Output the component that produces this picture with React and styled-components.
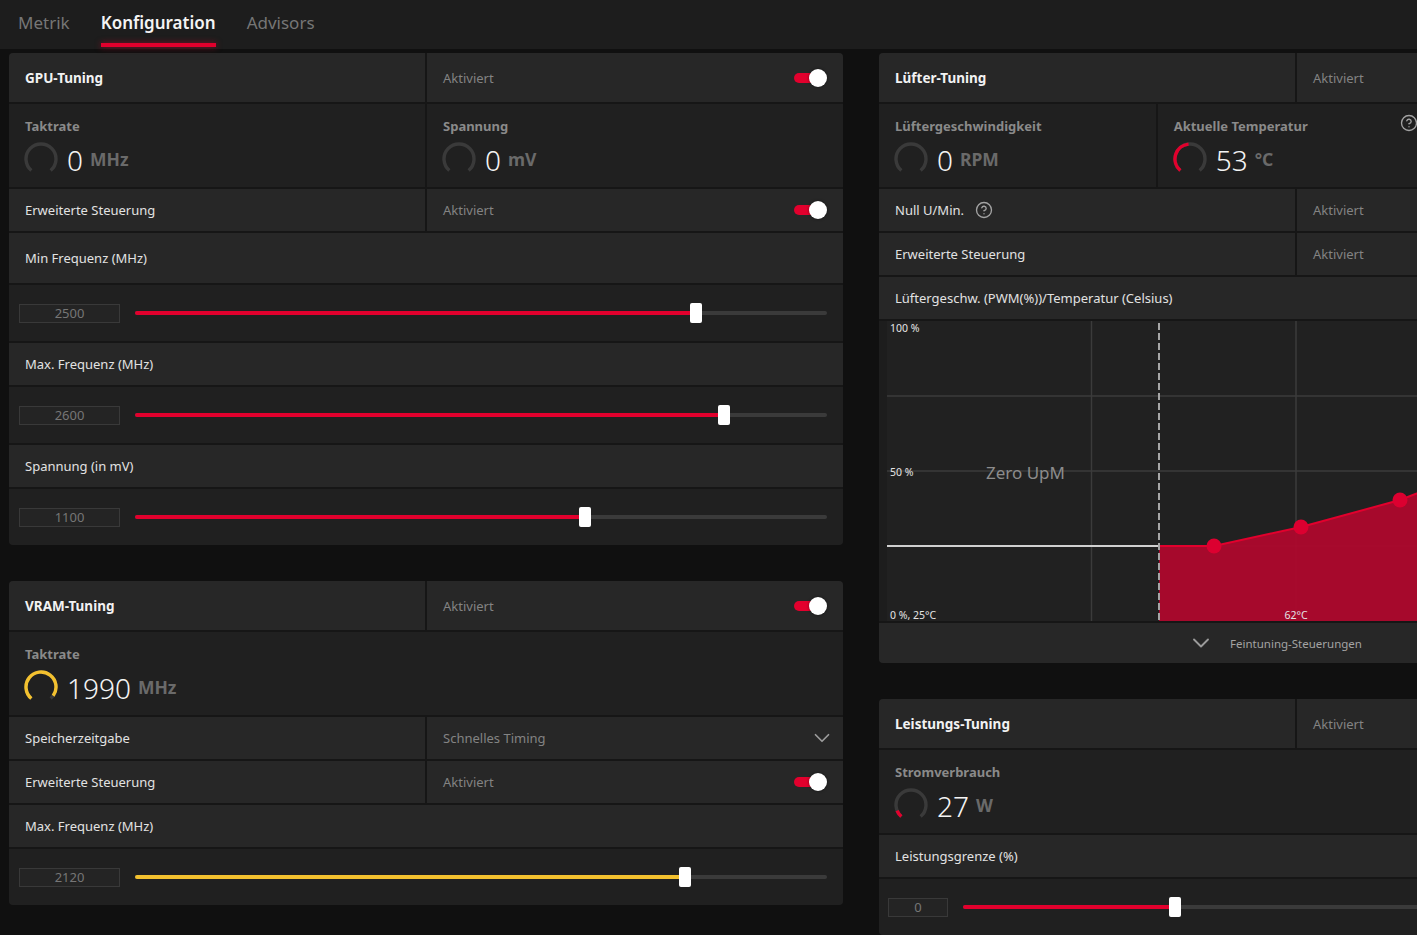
import React from "react";
import styled, { createGlobalStyle } from "styled-components";
import { ChevronDown, CircleHelp } from "lucide-react";

const RED = "#e2002d";
const YELLOW = "#f3c12f";

const GlobalStyle = createGlobalStyle`
  *, *::before, *::after { box-sizing: border-box; }
  html, body { margin: 0; padding: 0; background: #101010; }
  body {
    width: 1417px;
    height: 935px;
    overflow: hidden;
    font-family: "Noto Sans", "Open Sans", "DejaVu Sans", sans-serif;
    color: #e6e6e6;
    -webkit-font-smoothing: antialiased;
  }
`;

const Screen = styled.div`
  width: 1417px;
  height: 935px;
  overflow: hidden;
  display: flex;
  flex-direction: column;
`;

const TopBar = styled.header`
  flex: 0 0 49px;
  display: flex;
  gap: 31px;
  padding-left: 18px;
  background: #1d1d1d;
`;

const Tab = styled.div`
  position: relative;
  height: 49px;
  display: flex;
  align-items: center;
  padding-bottom: 5px;
  font-size: 17px;
  font-weight: ${(p) => (p.$active ? 600 : 400)};
  color: ${(p) => (p.$active ? "#f4f4f4" : "#767676")};
  &::after {
    content: "";
    display: ${(p) => (p.$active ? "block" : "none")};
    position: absolute;
    left: 0;
    right: 0;
    bottom: 2px;
    height: 4px;
    background: ${RED};
    box-shadow: 0 0 6px rgba(226, 0, 45, 0.55);
  }
`;

const Workspace = styled.main`
  display: flex;
  align-items: flex-start;
  gap: 36px;
  padding: 4px 0 0 9px;
`;

const Column = styled.div`
  flex: 0 0 834px;
  width: 834px;
  display: flex;
  flex-direction: column;
  gap: 36px;
`;

const Panel = styled.section`
  display: flex;
  flex-direction: column;
  gap: 2px;
  background: #161616;
  border-radius: 4px;
  overflow: hidden;
`;

const Row = styled.div`
  display: grid;
  grid-template-columns: repeat(${(p) => p.$cols || 1}, 1fr);
  gap: 2px;
  height: ${(p) => p.$h || 42}px;
`;

const Cell = styled.div`
  display: flex;
  align-items: center;
  gap: 11px;
  min-width: 0;
  padding: 0 16px;
  background: #272727;
`;

const Title = styled.span`
  font-size: 13.5px;
  font-weight: 700;
  color: #f2f2f2;
  white-space: nowrap;
`;

const Label = styled.span`
  font-size: 13px;
  color: #e2e2e2;
  white-space: nowrap;
`;

const Status = styled.span`
  font-size: 13px;
  color: #838383;
  white-space: nowrap;
`;

const Toggle = styled.div`
  position: relative;
  margin-left: auto;
  width: 33px;
  height: 18px;
  flex: 0 0 33px;
  &::before {
    content: "";
    position: absolute;
    left: 0;
    top: 4px;
    width: 29px;
    height: 10px;
    border-radius: 5px;
    background: ${RED};
  }
  &::after {
    content: "";
    position: absolute;
    right: 0;
    top: 0;
    width: 18px;
    height: 18px;
    border-radius: 50%;
    background: #fff;
    box-shadow: 0 0 3px rgba(0, 0, 0, 0.5);
  }
`;

const SelectChevron = styled(ChevronDown)`
  margin-left: auto;
  margin-right: -8px;
  color: #9b9b9b;
  flex: 0 0 auto;
`;

const Help = styled(CircleHelp)`
  color: #a3a3a3;
  flex: 0 0 auto;
`;

const MetricCell = styled.div`
  position: relative;
  display: flex;
  flex-direction: column;
  padding: 13px 16px 0;
  background: #202020;
`;

const MetricLabel = styled.div`
  font-size: 13px;
  font-weight: 700;
  line-height: 18px;
  color: #8a8a8a;
`;

const ValueLine = styled.div`
  display: flex;
  align-items: center;
  height: 36px;
  margin-top: 6px;
  margin-left: -1px;
`;

const Num = styled.span`
  margin-left: 9px;
  font-size: 28px;
  font-weight: 300;
  line-height: 1;
  color: #f4f4f4;
  transform: translateY(1px);
`;

const Unit = styled.span`
  margin-left: 7px;
  font-size: 17.5px;
  font-weight: 700;
  line-height: 1;
  color: #6a6a6a;
  transform: translateY(1px);
`;

const CornerHelp = styled(CircleHelp)`
  position: absolute;
  top: 10px;
  right: 16px;
  color: #a3a3a3;
`;

const SliderRow = styled.div`
  display: flex;
  align-items: center;
  gap: 15px;
  height: 56px;
  padding: 0 16px 0 ${(p) => p.$pad || 10}px;
  background: #202020;
`;

const ValueBox = styled.div`
  flex: 0 0 ${(p) => p.$w || 101}px;
  height: 19px;
  display: flex;
  align-items: center;
  justify-content: center;
  border: 1px solid #393939;
  background: #242424;
  font-size: 13px;
  color: #767676;
`;

const Track = styled.div`
  position: relative;
  flex: 1;
  height: 4px;
  border-radius: 2px;
  background: #3a3a3a;
`;

const Fill = styled.div`
  height: 100%;
  border-radius: 2px;
  background: ${(p) => p.$color};
`;

const Thumb = styled.div`
  position: absolute;
  top: 50%;
  width: 12px;
  height: 20px;
  margin-left: -6px;
  transform: translateY(-50%);
  border-radius: 2px;
  background: #fff;
`;

const ChartRow = styled.div`
  height: 300px;
  padding: 0 8px;
  background: #1d1d1d;
`;

const ChartSvg = styled.svg`
  display: block;
  background: #212121;
  font-family: "Noto Sans", "Open Sans", sans-serif;
`;

const ChartFooter = styled.div`
  height: 40px;
  display: flex;
  align-items: center;
  justify-content: center;
  background: #272727;
`;

const FooterLink = styled.span`
  position: relative;
  font-size: 11.5px;
  color: #a3a3a3;
`;

const FooterChevron = styled(ChevronDown)`
  position: absolute;
  right: 100%;
  top: 50%;
  margin-right: 15px;
  transform: translateY(-50%);
  color: #9b9b9b;
`;

function Gauge({ value = 0, color = RED }) {
  const r = 15;
  const c = 17;
  const start = 220;
  const sweep = 280;
  const pt = (a) => {
    const rad = (a * Math.PI) / 180;
    return [c + r * Math.sin(rad), c - r * Math.cos(rad)];
  };
  const arc = (a0, a1) => {
    const [x0, y0] = pt(a0);
    const [x1, y1] = pt(a1);
    const large = a1 - a0 > 180 ? 1 : 0;
    return `M${x0.toFixed(2)} ${y0.toFixed(2)} A${r} ${r} 0 ${large} 1 ${x1.toFixed(2)} ${y1.toFixed(2)}`;
  };
  return (
    <svg width="34" height="34" viewBox="0 0 34 34">
      <path d={arc(start, start + sweep)} fill="none" stroke="#3a3a3a" strokeWidth="3.4" />
      {value > 0 && (
        <path d={arc(start, start + sweep * value)} fill="none" stroke={color} strokeWidth="3.4" />
      )}
    </svg>
  );
}

function Metric({ label, value, unit, gauge = 0, color, help }) {
  return (
    <MetricCell>
      <MetricLabel>{label}</MetricLabel>
      <ValueLine>
        <Gauge value={gauge} color={color} />
        <Num>{value}</Num>
        <Unit>{unit}</Unit>
      </ValueLine>
      {help && <CornerHelp size={18} strokeWidth={1.8} />}
    </MetricCell>
  );
}

function Slider({ value, fraction, color = RED, boxWidth, pad }) {
  return (
    <SliderRow $pad={pad}>
      <ValueBox $w={boxWidth}>{value}</ValueBox>
      <Track>
        <Fill $color={color} style={{ width: `${fraction * 100}%` }} />
        <Thumb style={{ left: `${fraction * 100}%` }} />
      </Track>
    </SliderRow>
  );
}

function HeaderRow({ title, status = "Aktiviert" }) {
  return (
    <Row $cols={2} $h={49}>
      <Cell>
        <Title>{title}</Title>
      </Cell>
      <Cell>
        <Status>{status}</Status>
        <Toggle />
      </Cell>
    </Row>
  );
}

function ToggleRow({ label }) {
  return (
    <Row $cols={2}>
      <Cell>
        <Label>{label}</Label>
      </Cell>
      <Cell>
        <Status>Aktiviert</Status>
        <Toggle />
      </Cell>
    </Row>
  );
}

function LabelRow({ label, h }) {
  return (
    <Row $h={h}>
      <Cell>
        <Label>{label}</Label>
      </Cell>
    </Row>
  );
}

function FanChart() {
  const W = 818;
  const H = 300;
  const curve = [
    [327, 225],
    [414, 206],
    [513, 179],
    [612, 140],
    [716, 96],
    [818, 52],
  ];
  const area =
    `M272 ${H} L272 225 ` + curve.map(([x, y]) => `L${x} ${y}`).join(" ") + ` L${W} ${H} Z`;
  const line = `M272 225 ` + curve.map(([x, y]) => `L${x} ${y}`).join(" ");
  return (
    <ChartSvg width={W} height={H} viewBox={`0 0 ${W} ${H}`}>
      {[75, 150, 225].map((y) => (
        <line key={y} x1="0" x2={W} y1={y} y2={y} stroke="#3b3b3b" strokeWidth="1.5" />
      ))}
      {[204.5, 409, 613.5].map((x) => (
        <line key={x} x1={x} x2={x} y1="0" y2={H} stroke="#3b3b3b" strokeWidth="1.5" />
      ))}
      <path d={area} fill="#b0072d" opacity="0.93" />
      <line x1="0" x2="272" y1="225" y2="225" stroke="#d0d0d0" strokeWidth="2" />
      <path d={line} fill="none" stroke="#e2002d" strokeWidth="2" />
      <line x1="272" x2="272" y1="2" y2={H} stroke="#a6a6a6" strokeWidth="2" strokeDasharray="7 3" />
      {curve.slice(0, 4).map(([x, y]) => (
        <circle key={x} cx={x} cy={y} r="7.5" fill="#dc0030" />
      ))}
      <text x="3" y="11" fontSize="10.5" fill="#e4e4e4">100 %</text>
      <text x="3" y="155" fontSize="10.5" fill="#e4e4e4">50 %</text>
      <text x="3" y="298" fontSize="10.5" fill="#e4e4e4">0 %, 25°C</text>
      <text x="409" y="298" fontSize="10.5" fill="#e4e4e4" textAnchor="middle">62°C</text>
      <text x="99" y="158" fontSize="17" fill="#8c8c8c">Zero UpM</text>
    </ChartSvg>
  );
}

export default function App() {
  return (
    <Screen>
      <GlobalStyle />
      <TopBar>
        <Tab>Metrik</Tab>
        <Tab $active>Konfiguration</Tab>
        <Tab>Advisors</Tab>
      </TopBar>
      <Workspace>
        <Column>
          <Panel>
            <HeaderRow title="GPU-Tuning" />
            <Row $cols={2} $h={83}>
              <Metric label="Taktrate" value="0" unit="MHz" />
              <Metric label="Spannung" value="0" unit="mV" />
            </Row>
            <ToggleRow label="Erweiterte Steuerung" />
            <LabelRow label="Min Frequenz (MHz)" h={50} />
            <Slider value="2500" fraction={0.811} />
            <LabelRow label="Max. Frequenz (MHz)" />
            <Slider value="2600" fraction={0.851} />
            <LabelRow label="Spannung (in mV)" />
            <Slider value="1100" fraction={0.65} />
          </Panel>
          <Panel>
            <HeaderRow title="VRAM-Tuning" />
            <Row $h={83}>
              <Metric label="Taktrate" value="1990" unit="MHz" gauge={0.95} color={YELLOW} />
            </Row>
            <Row $cols={2}>
              <Cell>
                <Label>Speicherzeitgabe</Label>
              </Cell>
              <Cell>
                <Status>Schnelles Timing</Status>
                <SelectChevron size={26} strokeWidth={1.6} />
              </Cell>
            </Row>
            <ToggleRow label="Erweiterte Steuerung" />
            <LabelRow label="Max. Frequenz (MHz)" />
            <Slider value="2120" fraction={0.795} color={YELLOW} />
          </Panel>
        </Column>
        <Column>
          <Panel>
            <HeaderRow title="Lüfter-Tuning" />
            <Row $cols={3} $h={83}>
              <Metric label="Lüftergeschwindigkeit" value="0" unit="RPM" />
              <Metric label="Aktuelle Temperatur" value="53" unit="°C" gauge={0.48} help />
              <MetricCell />
            </Row>
            <Row $cols={2}>
              <Cell>
                <Label>Null U/Min.</Label>
                <Help size={18} strokeWidth={1.8} />
              </Cell>
              <Cell>
                <Status>Aktiviert</Status>
                <Toggle />
              </Cell>
            </Row>
            <ToggleRow label="Erweiterte Steuerung" />
            <LabelRow label="Lüftergeschw. (PWM(%))/Temperatur (Celsius)" />
            <ChartRow>
              <FanChart />
            </ChartRow>
            <ChartFooter>
              <FooterLink>
                <FooterChevron size={28} strokeWidth={1.6} />
                Feintuning-Steuerungen
              </FooterLink>
            </ChartFooter>
          </Panel>
          <Panel>
            <HeaderRow title="Leistungs-Tuning" />
            <Row $h={83}>
              <Metric label="Stromverbrauch" value="27" unit="W" gauge={0.1} />
            </Row>
            <LabelRow label="Leistungsgrenze (%)" />
            <Slider value="0" fraction={0.289} boxWidth={60} pad={9} />
          </Panel>
        </Column>
      </Workspace>
    </Screen>
  );
}
